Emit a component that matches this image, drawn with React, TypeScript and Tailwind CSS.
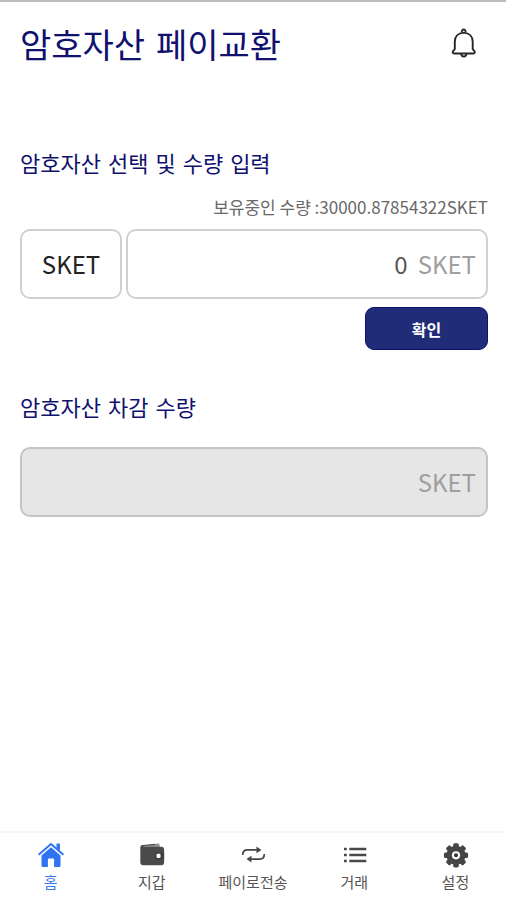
import React, { useState } from "react";

type NavItem = { label: string; icon: React.ReactNode; active?: boolean };

function BellIcon() {
  return (
    <svg className="h-8 w-7" viewBox="0 0 28 32" fill="none" stroke="#262626" strokeWidth="1.9" strokeLinejoin="round" aria-hidden="true">
      <path d="M11.8 4.400c-.6-3.800 4.400-3.800 3.800 0" />
      <path d="M13.700 4.600C8 5 4.800 8.800 4.800 13.600v7.600l-1.700 1.900c-.9 1.200-.4 2.400 1 2.400h19.300c1.400 0 1.900-1.200 1-2.400l-1.700-1.900v-7.600c0-4.800-3.300-8.600-9-9Z" />
      <path d="M11.200 26c.3 3.400 4.900 3.400 5.200 0" />
    </svg>
  );
}

function HomeIcon() {
  return (
    <svg className="h-7 w-7" viewBox="0 0 28 28" aria-hidden="true">
      <path d="M4.500 14.400 14 6.300l9.500 8.100v10.300a1.200 1.200 0 0 1-1.200 1.200h-5.200v-7.300a1 1 0 0 0-1-1h-4.200a1 1 0 0 0-1 1v7.300H5.700a1.200 1.200 0 0 1-1.200-1.200Z" fill="#2f73f0" />
      <path d="M1.600 13.800 14 3l12.400 10.800" fill="none" stroke="#2f73f0" strokeWidth="2" />
      <path d="M19.500 2.500h3.400v7.800l-3.400-3Z" fill="#2f73f0" />
    </svg>
  );
}

function WalletIcon() {
  return (
    <svg className="h-7 w-7" viewBox="0 0 28 28" aria-hidden="true">
      <path d="M4 5.600 19.500 2.600c1.200-.2 2.200.5 2.200 1.700v1.600H4Z" fill="#929292" />
      <path d="M5.500 5.700h17.800a2.800 2.800 0 0 1 2.800 2.800v13a2.800 2.800 0 0 1-2.800 2.800h-18a3 3 0 0 1-3-3V6.400c0-1.300 1-2.300 2.300-2.500L17 2.700V4L5.900 5.100Z" fill="#4b4b4b" />
      <path d="M18.500 11.400h7.600v7h-7.600a2 2 0 0 1-2-2v-3a2 2 0 0 1 2-2Z" fill="#3e3e3e" />
      <rect x="18.500" y="12.700" width="4" height="4.400" rx="1" fill="#fff" />
    </svg>
  );
}

function TransferIcon() {
  return (
    <svg className="h-7 w-7" viewBox="0 0 28 28" fill="none" stroke="#454545" strokeWidth="1.700" aria-hidden="true">
      <path d="M3.700 14c0-3.200 1.800-5.100 4.600-5.100H19" />
      <path d="m17.500 5.500 5 3.400-5 3.400Z" fill="#454545" stroke="none" />
      <path d="M25.300 13c0 3.200-1.800 5.100-4.600 5.100H11" />
      <path d="m12.500 14.700-5 3.400 5 3.400Z" fill="#454545" stroke="none" />
    </svg>
  );
}

function ListIcon() {
  return (
    <svg className="h-7 w-7" viewBox="0 0 28 28" fill="#494949" aria-hidden="true">
      <path d="M4 6.700h2.800v2.500H4ZM9.300 6.700h17v2.500h-17ZM4 12.700h2.800v2.500H4ZM9.300 12.700h17v2.500h-17ZM4 18.700h2.800v2.500H4ZM9.300 18.700h17v2.500h-17Z" />
    </svg>
  );
}

function GearIcon() {
  return (
    <svg className="h-7 w-7" viewBox="0 0 28 28" aria-hidden="true">
      <g fill="#454545">
        <circle cx="15" cy="14.300" r="9.500" />
        {[0, 45, 90, 135, 180, 225, 270, 315].map((angle) => (
          <rect key={angle} x="12.200" y="2.200" width="5.600" height="7" rx="1.600" transform={`rotate(${angle} 15 14.300)`} />
        ))}
      </g>
      <circle cx="15" cy="14.300" r="4.100" fill="#fff" />
      <circle cx="15" cy="14.300" r="2" fill="#333333" />
    </svg>
  );
}

const navItems: NavItem[] = [
  { label: "홈", icon: <HomeIcon />, active: true },
  { label: "지갑", icon: <WalletIcon /> },
  { label: "페이로전송", icon: <TransferIcon /> },
  { label: "거래", icon: <ListIcon /> },
  { label: "설정", icon: <GearIcon /> },
];

export default function App() {
  const [amount, setAmount] = useState("0");

  return (
    <div className="flex min-h-screen flex-col border-t-2 border-[#bbbbbb] bg-white font-['Noto_Sans_CJK_KR',sans-serif] text-[#222222]">
      <header className="flex items-center justify-between pt-4 pr-7 pl-5">
        <h1 className="font-['DejaVu_Sans','Noto_Sans_CJK_KR',sans-serif] text-[34px] leading-[56px] text-[#10106e]">암호자산 페이교환</h1>
        <button type="button" aria-label="알림" className="pb-1">
          <BellIcon />
        </button>
      </header>

      <main className="flex flex-1 flex-col pr-[18px] pl-5">
        <section className="flex flex-col pt-[75px]">
          <h2 className="font-['DejaVu_Sans','Noto_Sans_CJK_KR',sans-serif] text-[22px] leading-8 text-[#10106e]">암호자산 선택 및 수량 입력</h2>
          <p className="mt-3.5 text-right text-[17px] leading-6 text-[#686868]">보유중인 수량 :30000.87854322SKET</p>
          <div className="mt-2.5 flex gap-1">
            <select
              aria-label="암호자산"
              className="h-[70px] w-[102px] appearance-none rounded-[10px] border-2 border-[#d0d0d0] bg-white text-center text-[24px] [text-align-last:center]"
            >
              <option>SKET</option>
            </select>
            <label className="flex h-[70px] min-w-0 flex-1 items-center gap-2.5 rounded-[10px] border-2 border-[#d0d0d0] pr-2.5 pl-3 text-[24px]">
              <input
                type="text"
                inputMode="decimal"
                aria-label="수량"
                value={amount}
                onChange={(e) => setAmount(e.target.value)}
                className="w-full min-w-0 flex-1 bg-transparent text-right text-[#555555] outline-none"
              />
              <span className="text-[#9f9f9f]">SKET</span>
            </label>
          </div>
          <button type="button" className="mt-2 h-[43px] w-[123px] self-end rounded-[9px] border border-[#10106e] bg-[#202c78] text-base font-bold text-white">
            확인
          </button>
        </section>

        <section className="pt-[43px]">
          <h2 className="font-['DejaVu_Sans','Noto_Sans_CJK_KR',sans-serif] text-[22px] leading-8 text-[#10106e]">암호자산 차감 수량</h2>
          <label className="mt-[22px] flex h-[70px] items-center gap-2.5 rounded-[10px] border-2 border-[#c4c4c4] bg-[#e6e6e6] pr-2.5 pl-3 text-[24px]">
            <input type="text" readOnly aria-label="차감 수량" className="w-full min-w-0 flex-1 bg-transparent text-right outline-none" />
            <span className="text-[#9f9f9f]">SKET</span>
          </label>
        </section>
      </main>

      <nav className="grid grid-cols-5 border-t-2 border-[#f5f5f5] pt-2 pb-1.5">
        {navItems.map((item) => (
          <a
            key={item.label}
            href="#"
            aria-current={item.active ? "page" : undefined}
            className={`flex flex-col items-center gap-px text-[15px] leading-6 ${item.active ? "text-[#3b78f0]" : "text-[#555555]"}`}
          >
            {item.icon}
            {item.label}
          </a>
        ))}
      </nav>
    </div>
  );
}
